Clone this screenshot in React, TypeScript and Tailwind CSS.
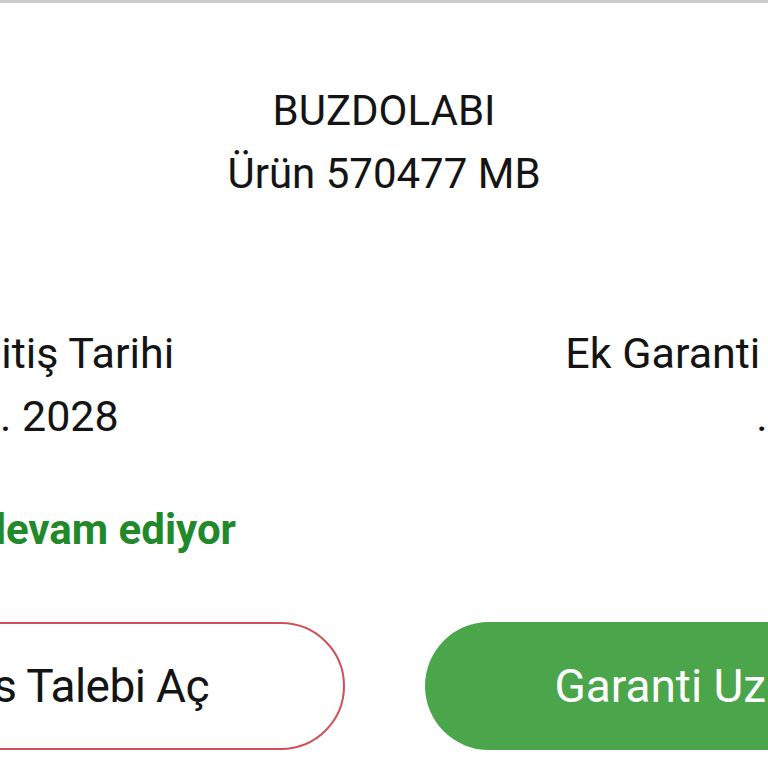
import React from "react";

export default function App() {
  return (
    <div
      className="w-[768px] h-[768px] overflow-hidden bg-white text-[#141414]"
      style={{ fontFamily: "Roboto, 'Noto Sans', sans-serif" }}
    >
      <div className="h-[3px] bg-[#cdcdcd]" />
      <div className="pt-[76px] flex flex-col items-center text-[42px] leading-[63px]">
        <div>BUZDOLABI</div>
        <div>Ürün 570477 MB</div>
      </div>
      <div className="mt-[117px] ml-[-384px] w-[1536px] grid grid-cols-2 text-[43px] leading-[63px]">
        <div className="flex flex-col items-center">
          <div>Garanti Bitiş Tarihi</div>
          <div>12. 03. 2028</div>
        </div>
        <div className="flex flex-col items-center">
          <div>Ek Garanti Bitiş Tarihi</div>
          <div className="pr-[12px]">.</div>
        </div>
      </div>
      <div className="mt-[50px] ml-[-264px] w-[500px] text-right text-[42px] leading-[63px] font-bold text-[#22892a]">
        Garantiniz devam ediyor
      </div>
      <div className="mt-[61px] ml-[-245px] w-[1260px] flex gap-[80px]">
        <button className="w-[590px] h-[128px] shrink-0 rounded-full border-2 border-[#d0505a] bg-white text-[46px] tracking-[-0.6px] pl-[4px] text-[#141414] flex items-center justify-center">
          Servis Talebi Aç
        </button>
        <button className="w-[590px] h-[128px] shrink-0 rounded-full bg-[#4aa54b] text-[46px] pr-[14px] text-white flex items-center justify-center">
          Garanti Uzatma
        </button>
      </div>
    </div>
  );
}
